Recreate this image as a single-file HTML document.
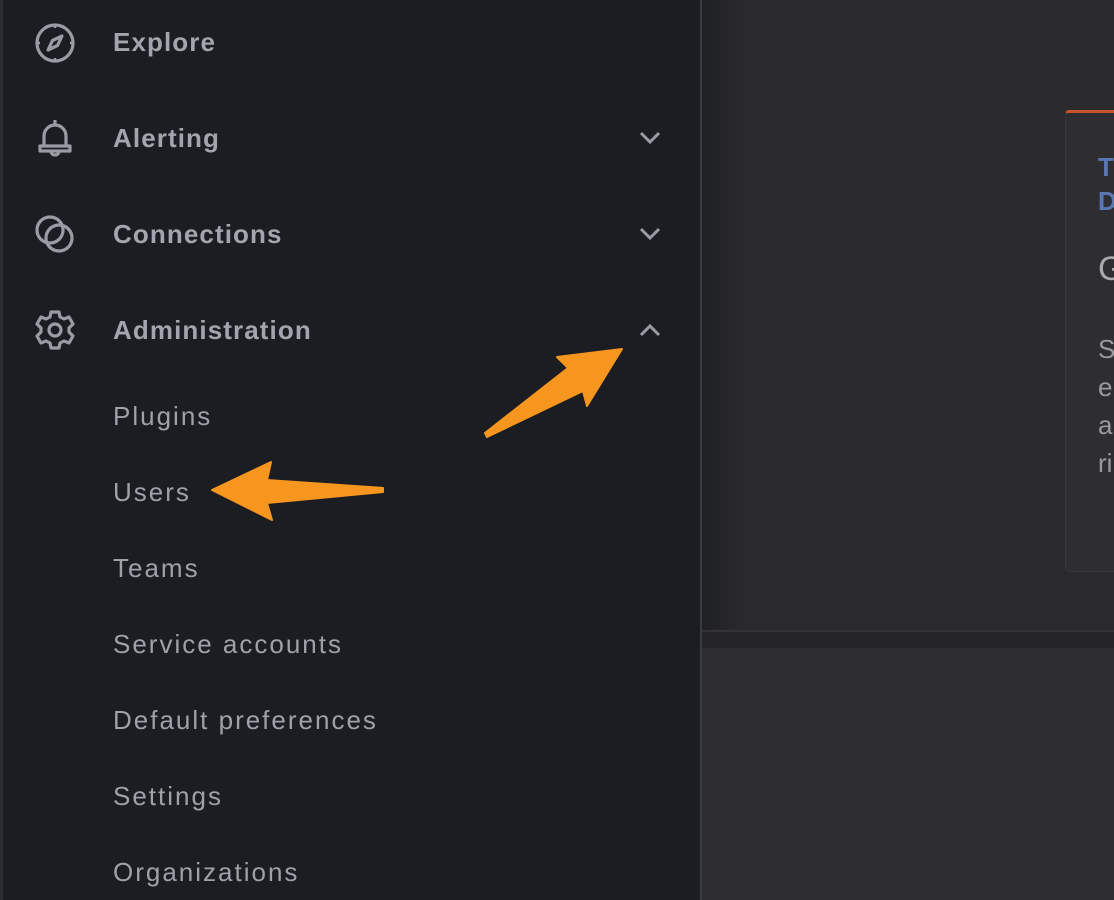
<!DOCTYPE html>
<html><head><style>
body{margin:0;width:1114px;height:900px;overflow:hidden;background:#2a2a2d;font-family:"Liberation Sans",sans-serif;position:relative}
.side{position:absolute;left:0;top:0;width:700px;height:900px;background:#1b1d22;border-right:2px solid #3a3b40}
.side .edge{position:absolute;left:0;top:0;width:3px;height:900px;background:#2c2d32}
.it{position:absolute;left:113px;color:#9fa1aa;font-size:26px;line-height:30px;letter-spacing:2px}
.top{font-weight:bold;color:#a3a5ae;letter-spacing:1.1px}
.ic{position:absolute;left:34px}
.chev{position:absolute;left:638px}
</style></head><body>
<div class="side"><div class="edge"></div>
<svg class="ic" style="top:22px" width="42" height="42" viewBox="0 0 42 42" fill="none" stroke="#9a9ca5" stroke-width="3.2"><circle cx="21" cy="21" r="18"/><path d="M28 14 L23.5 23.5 L14 28 L18.5 18.5 Z" stroke-linejoin="round"/><path d="M21 3v3M21 36v3M3 21h3M36 21h3" stroke-width="2.5"/></svg>
<div class="it top" style="top:27px">Explore</div>
<svg class="ic" style="top:117px" width="42" height="42" viewBox="0 0 42 42" fill="none" stroke="#9a9ca5" stroke-width="3.2" stroke-linejoin="round"><path d="M21 3v4M10 28V19a11 11 0 0 1 22 0v9M6 29h30v5H6z"/><path d="M17 34a4 4 0 0 0 8 0"/></svg>
<div class="it top" style="top:123px">Alerting</div>
<svg class="chev" style="top:128px" width="24" height="20" viewBox="0 0 24 20" fill="none" stroke="#9a9ca5" stroke-width="3"><path d="M3 5l9 9 9-9"/></svg>
<svg class="ic" style="top:213px" width="42" height="42" viewBox="0 0 42 42" fill="none" stroke="#9a9ca5" stroke-width="3.2"><circle cx="16" cy="17" r="13"/><circle cx="25" cy="25" r="13"/></svg>
<div class="it top" style="top:219px">Connections</div>
<svg class="chev" style="top:224px" width="24" height="20" viewBox="0 0 24 20" fill="none" stroke="#9a9ca5" stroke-width="3"><path d="M3 5l9 9 9-9"/></svg>
<svg class="ic" style="top:309px" width="42" height="42" viewBox="0 0 42 42" fill="none" stroke="#9a9ca5" stroke-width="3.2" stroke-linejoin="round"><path d="M17 3h8l1 5 4 2 5-2 4 7-4 4v4l4 4-4 7-5-2-4 2-1 5h-8l-1-5-4-2-5 2-4-7 4-4v-4L3 15l4-7 5 2 4-2z"/><circle cx="21" cy="21" r="6"/></svg>
<div class="it top" style="top:315px">Administration</div>
<svg class="chev" style="top:320px" width="24" height="20" viewBox="0 0 24 20" fill="none" stroke="#9a9ca5" stroke-width="3"><path d="M3 15l9-9 9 9"/></svg>
<div class="it" style="top:401px">Plugins</div>
<div class="it" style="top:477px">Users</div>
<div class="it" style="top:553px">Teams</div>
<div class="it" style="top:629px">Service accounts</div>
<div class="it" style="top:705px">Default preferences</div>
<div class="it" style="top:781px">Settings</div>
<div class="it" style="top:857px">Organizations</div>
</div>
<div style="position:absolute;left:702px;top:0;width:40px;height:900px;background:linear-gradient(90deg,#1f2024,#2a2a2d)"></div>
<div style="position:absolute;left:1065px;top:110px;width:60px;height:458px;background:#2e2e32;border:1px solid #37373b;border-radius:4px;border-top:3px solid #c4552a"></div>
<div style="position:absolute;left:1098px;top:150px;color:#5a77b5;font-size:26px;line-height:34px;font-weight:bold">T<br>D</div>
<div style="position:absolute;left:1098px;top:250px;color:#aaa;font-size:34px">G</div>
<div style="position:absolute;left:1098px;top:330px;color:#9a9a9e;font-size:26px;line-height:38px">S<br>e<br>a<br>ri</div>
<div style="position:absolute;left:702px;top:630px;width:412px;height:18px;background:#252528;border-top:2px solid #333338"></div>
<div style="position:absolute;left:702px;top:648px;width:412px;height:252px;background:#2d2d30"></div>
<svg style="position:absolute;left:0;top:0" width="1114" height="900"><g fill="#f7961e" stroke="#f7961e" stroke-width="2" stroke-linejoin="round">
<path d="M212 490 L271 462 L267 480 L383 488 L383 492 L267 503 L272 520 Z"/>
<path d="M622 349 L557 357 L568 368 L485 433 L487 437 L583 391 L587 406 Z"/></g></svg>
</body></html>
